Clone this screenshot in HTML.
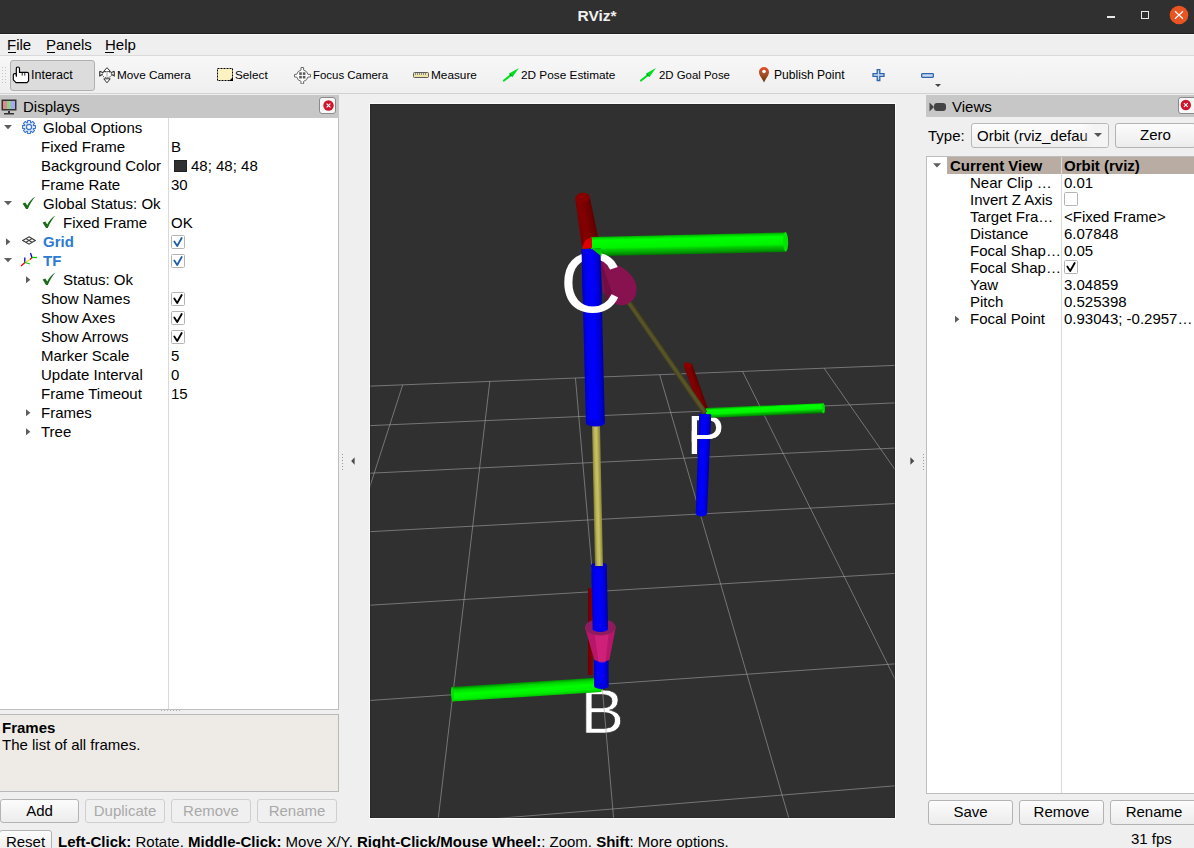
<!DOCTYPE html>
<html><head><meta charset="utf-8">
<style>
*{margin:0;padding:0;box-sizing:border-box}
html,body{width:1194px;height:848px;overflow:hidden;background:#efefef;font-family:"Liberation Sans",sans-serif;color:#000}
.a{position:absolute}
.t{position:absolute;white-space:pre;font-size:15px;line-height:19px}
.tb{position:absolute;white-space:pre;font-size:11.8px;line-height:16px}
.btn{position:absolute;border:1px solid #b3b3b3;border-radius:3px;background:linear-gradient(#fcfcfc,#ececec);font-size:15px;text-align:center;line-height:22px}
.dis{color:#a9a9a9;border-color:#cfcfcf;background:#f0f0f0}
.cb{position:absolute;width:13px;height:13px;border:1px solid #a6a6a6;background:#fff;border-radius:2px}
.row{position:absolute;left:0;height:19px}
</style></head><body>
<!-- title bar -->
<div class="a" style="left:0;top:0;width:1194px;height:34px;background:#303030;border-bottom:1px solid #1f1f1f"></div>
<div class="a" style="left:0;top:34px;width:1194px;height:1px;background:#fafafa"></div>
<div class="t" style="left:0;width:1194px;top:6px;text-align:center;color:#f0f0f0;font-weight:bold;font-size:15.5px">RViz*</div>
<div class="a" style="left:1107px;top:16px;width:8px;height:2px;background:#e8e8e8"></div>
<div class="a" style="left:1141px;top:11px;width:8px;height:8px;border:1px solid #e8e8e8"></div>
<svg class="a" style="left:1169px;top:5px" width="20" height="20" viewBox="0 0 20 20"><circle cx="10" cy="10" r="9.3" fill="#e95420"/><path d="M6 6.2L14 13.8M14 6.2L6 13.8" stroke="#fff" stroke-width="1.2"/></svg>

<!-- menu bar -->
<div class="a" style="left:0;top:55px;width:1194px;height:1px;background:#d9d9d9"></div>
<div class="t" style="left:7px;top:32px;line-height:26px">File</div>
<div class="t" style="left:46px;top:32px;line-height:26px">Panels</div>
<div class="t" style="left:105px;top:32px;line-height:26px">Help</div>
<div class="a" style="left:8px;top:52px;width:8px;height:1px;background:#000"></div>
<div class="a" style="left:47px;top:52px;width:8px;height:1px;background:#000"></div>
<div class="a" style="left:105px;top:52px;width:9px;height:1px;background:#000"></div>
<!-- toolbar -->
<div class="a" style="left:0;top:56px;width:1194px;height:37px;background:linear-gradient(#f7f7f7,#efefef)"></div>
<div class="a" style="left:0;top:93px;width:1194px;height:1px;background:#d2d2d2"></div>
<!-- grip -->
<svg class="a" style="left:1px;top:66px" width="8" height="18"><g fill="#c4c4c4"><rect x="1" y="1" width="1" height="1"/><rect x="4" y="1" width="1" height="1"/><rect x="1" y="4" width="1" height="1"/><rect x="4" y="4" width="1" height="1"/><rect x="1" y="7" width="1" height="1"/><rect x="4" y="7" width="1" height="1"/><rect x="1" y="10" width="1" height="1"/><rect x="4" y="10" width="1" height="1"/><rect x="1" y="13" width="1" height="1"/><rect x="4" y="13" width="1" height="1"/><rect x="1" y="16" width="1" height="1"/><rect x="4" y="16" width="1" height="1"/></g></svg>
<div class="a" style="left:10px;top:60px;width:85px;height:31px;background:#dcdcdc;border:1px solid #b0b0b0;border-radius:3px"></div>
<svg class="a" style="left:12px;top:66px" width="18" height="18" viewBox="0 0 18 18"><path d="M4.3 9.5V2.6Q4.3 1 5.9 1Q7.5 1 7.5 2.6V6.4H15.2Q16.6 6.4 16.6 7.8V14.8L15 16.6H4L1.3 13.8V9Q1.3 7.6 2.8 7.6H4.3z" fill="#fff" stroke="#000" stroke-width="1.15" stroke-linejoin="round"/><path d="M10.2 6.6V9.6M12.8 6.6V9.6M4.3 8V11" stroke="#000" stroke-width="0.9"/></svg>
<div class="tb" style="left:31px;top:67.3px;font-size:12.5px">Interact</div>
<svg class="a" style="left:99px;top:67px" width="17" height="17" viewBox="0 0 17 17"><path d="M8 0.7L4.5 4.5h7z M8 15.8L4.8 11.8h6.4z" fill="#fff" stroke="#333" stroke-width="1"/><path d="M0.7 4.2v4.6l3.2-1.6 M15.3 4.2v4.6l-3.2-1.6 M0.7 4.2l3.5 1.6 M15.3 4.2l-3.5 1.6" fill="none" stroke="#333" stroke-width="1.1"/><ellipse cx="8" cy="7.6" rx="4.6" ry="3" fill="#fff" stroke="#333" stroke-width="1" stroke-dasharray="1.3 0.9"/><rect x="7.4" y="4.5" width="1.2" height="6.5" fill="#b8b8b8"/></svg>
<div class="tb" style="left:117px;top:67.3px;font-size:11.75px">Move Camera</div>
<svg class="a" style="left:217px;top:68px" width="17" height="14" viewBox="0 0 17 14"><rect x="0.5" y="0.5" width="15" height="12" fill="#faf2c0" stroke="#000" stroke-width="1" stroke-dasharray="2 1"/><path d="M16 9v4h-4z" fill="#000"/></svg>
<div class="tb" style="left:235px;top:67.3px;font-size:11.75px">Select</div>
<svg class="a" style="left:294px;top:67px" width="17" height="17" viewBox="0 0 17 17"><path d="M7 0.5h2.6v2.6a5.6 5.6 0 0 1 4.3 4.3h2.6V10h-2.6a5.6 5.6 0 0 1-4.3 4.3v2.6H7v-2.6A5.6 5.6 0 0 1 2.7 10H0.5V7.4h2.2A5.6 5.6 0 0 1 7 3.1z" fill="#fff" stroke="#6a6a6a" stroke-width="1"/><g fill="#5a5a5a"><rect x="5.2" y="5.3" width="2.6" height="2.6"/><rect x="8.8" y="5.3" width="2.6" height="2.6"/><rect x="5.2" y="8.9" width="2.6" height="2.6"/><rect x="8.8" y="8.9" width="2.6" height="2.6"/></g></svg>
<div class="tb" style="left:313px;top:67.3px;font-size:11.45px">Focus Camera</div>
<svg class="a" style="left:413px;top:72px" width="16" height="6" viewBox="0 0 16 6"><rect x="0.5" y="0.5" width="15" height="5" rx="1" fill="#efe3a6" stroke="#5c5c5c" stroke-width="1"/><path d="M2.5 1v2M4.5 1v2M6.5 1v2M8.5 1v2M10.5 1v2M12.5 1v2" stroke="#8a8a8a" stroke-width="1"/></svg>
<div class="tb" style="left:431px;top:67.3px;font-size:11.8px">Measure</div>
<svg class="a" style="left:503px;top:67px" width="17" height="15" viewBox="0 0 17 15"><path d="M1 13.5L8 8" stroke="#00e020" stroke-width="2.2" stroke-linecap="round"/><path d="M16 1L6 6.5 9.5 10z" fill="#00e020"/><path d="M6.5 6.8L9 9.5" stroke="#0a7a0a" stroke-width="1"/></svg>
<div class="tb" style="left:521px;top:67.3px;font-size:11.8px">2D Pose Estimate</div>
<svg class="a" style="left:640px;top:67px" width="17" height="15" viewBox="0 0 17 15"><path d="M1 13.5L8 8" stroke="#00e020" stroke-width="2.2" stroke-linecap="round"/><path d="M16 1L6 6.5 9.5 10z" fill="#00e020"/><path d="M6.5 6.8L9 9.5" stroke="#0a7a0a" stroke-width="1"/></svg>
<div class="tb" style="left:659px;top:67.3px;font-size:11.4px">2D Goal Pose</div>
<svg class="a" style="left:758px;top:66px" width="12" height="17" viewBox="0 0 12 17"><defs><linearGradient id="pin" x1="0" y1="0" x2="0" y2="1"><stop offset="0" stop-color="#e8502c"/><stop offset="0.55" stop-color="#a04a20"/><stop offset="1" stop-color="#553510"/></linearGradient></defs><path d="M6 16.5C4 12 1 9.5 1 6a5 5 0 0 1 10 0c0 3.5-3 6-5 10.5z" fill="url(#pin)"/><circle cx="6" cy="5.5" r="1.8" fill="#fff"/></svg>
<div class="tb" style="left:774px;top:67.3px;font-size:12.1px">Publish Point</div>
<svg class="a" style="left:872px;top:69px" width="14" height="13" viewBox="0 0 14 13"><path d="M5.2 0.7h2.6v4h4.2v2.6H7.8v4.2H5.2V7.3H1V4.7h4.2z" fill="#c9daf0" stroke="#2f63ab" stroke-width="1.3"/></svg>
<svg class="a" style="left:921px;top:73px" width="13" height="5" viewBox="0 0 13 5"><rect x="0.65" y="0.65" width="11.7" height="3.7" rx="0.8" fill="#c9daf0" stroke="#2f63ab" stroke-width="1.3"/></svg>
<div class="a" style="left:935px;top:84px;width:0;height:0;border-left:3px solid transparent;border-right:3px solid transparent;border-top:3px solid #444"></div>

<!-- displays panel -->
<div class="a" style="left:0;top:95px;width:339px;height:23px;background:#c7c7c7"></div>
<svg class="a" style="left:1px;top:99px" width="17" height="16" viewBox="0 0 17 16"><rect x="0.5" y="0.5" width="15" height="11" fill="#333"/><rect x="2" y="2" width="4" height="8" fill="#d98c8c"/><rect x="6" y="2" width="4" height="8" fill="#8fd08f"/><rect x="10" y="2" width="4" height="8" fill="#a8a8f0"/><rect x="7" y="12" width="2" height="2" fill="#333"/><rect x="3" y="14" width="10" height="1.5" fill="#333"/></svg>
<div class="t" style="left:23px;top:96px;line-height:21px">Displays</div>
<div class="a" style="left:319px;top:97px;width:17px;height:17px;background:#f8f8f8;border:1px solid #8a8a8a;border-radius:3px"></div>
<svg class="a" style="left:321.5px;top:98.5px" width="13" height="13" viewBox="0 0 13 13"><circle cx="6.5" cy="6.5" r="5.2" fill="#d0142c"/><path d="M4.6 4.6L8.4 8.4M8.4 4.6L4.6 8.4" stroke="#fff" stroke-width="1.1"/></svg>
<div class="a" style="left:0;top:118px;width:339px;height:592px;background:#fff;border-right:1px solid #bdbdbd;border-bottom:1px solid #bdbdbd"></div>
<div class="a" style="left:168px;top:118px;width:1px;height:591px;background:#d9d9d9"></div>
<svg class="a" style="left:4px;top:118px" width="9" height="19"><path d="M0 7H8L4 11.3Z" fill="#5e5e5e"/></svg>
<svg class="a" style="left:22px;top:120px" width="14" height="14" viewBox="0 0 14 14"><path d="M11.33 5.44 L13.46 5.66 L13.46 8.34 L11.33 8.56 L11.16 8.96 L12.52 10.62 L10.62 12.52 L8.96 11.16 L8.56 11.33 L8.34 13.46 L5.66 13.46 L5.44 11.33 L5.04 11.16 L3.38 12.52 L1.48 10.62 L2.84 8.96 L2.67 8.56 L0.54 8.34 L0.54 5.66 L2.67 5.44 L2.84 5.04 L1.48 3.38 L3.38 1.48 L5.04 2.84 L5.44 2.67 L5.66 0.54 L8.34 0.54 L8.56 2.67 L8.96 2.84 L10.62 1.48 L12.52 3.38 L11.16 5.04Z" fill="#e4ecf8" stroke="#3b78cc" stroke-width="1.1" stroke-linejoin="round"/><circle cx="7" cy="7" r="2.6" fill="none" stroke="#3b78cc" stroke-width="1.1"/><circle cx="7" cy="7" r="1" fill="#fff"/></svg>
<div class="t" style="left:43px;top:118px;">Global Options</div>
<div class="t" style="left:41px;top:137px;">Fixed Frame</div>
<div class="t" style="left:171px;top:137px;">B</div>
<div class="t" style="left:41px;top:156px;">Background Color</div>
<div class="a" style="left:174px;top:160px;width:13px;height:12px;background:#303030;border:1px solid #222"></div>
<div class="t" style="left:191px;top:156px;">48; 48; 48</div>
<div class="t" style="left:41px;top:175px;">Frame Rate</div>
<div class="t" style="left:171px;top:175px;">30</div>
<svg class="a" style="left:4px;top:194px" width="9" height="19"><path d="M0 7H8L4 11.3Z" fill="#5e5e5e"/></svg>
<svg class="a" style="left:22px;top:196px" width="14" height="14" viewBox="0 0 14 14"><path d="M0.6 7.6L3.4 6.4L5.2 9.4C7.2 5.6 9.6 2.6 13.4 0.4C10.6 3.6 8 7.4 5.8 12.9H4z" fill="#1a6b1a"/></svg>
<div class="t" style="left:43px;top:194px;">Global Status: Ok</div>
<svg class="a" style="left:42px;top:215px" width="14" height="14" viewBox="0 0 14 14"><path d="M0.6 7.6L3.4 6.4L5.2 9.4C7.2 5.6 9.6 2.6 13.4 0.4C10.6 3.6 8 7.4 5.8 12.9H4z" fill="#1a6b1a"/></svg>
<div class="t" style="left:63px;top:213px;">Fixed Frame</div>
<div class="t" style="left:171px;top:213px;">OK</div>
<svg class="a" style="left:6px;top:232px" width="9" height="19"><path d="M0 6.2V13.2L4.4 9.7Z" fill="#5e5e5e"/></svg>
<svg class="a" style="left:22px;top:236px" width="14" height="9" viewBox="0 0 14 9"><g fill="none" stroke="#3a3a3a" stroke-width="1.1"><path d="M7 0.8L13.2 4.5 7 8.2 0.8 4.5z"/><path d="M4 2.6L10 6.3M10 2.6L4 6.3"/></g></svg>
<div class="t" style="left:43px;top:232px;font-weight:bold;color:#2c7bd2">Grid</div>
<svg class="a" style="left:171px;top:234.5px" width="14" height="14" viewBox="0 0 14 14"><rect x="0.5" y="0.5" width="13" height="13" rx="1" fill="#fff" stroke="#b4b4b4"/><path d="M3.3 6.5L6.2 11L10.7 3" fill="none" stroke="#1f5fa8" stroke-width="1.8" stroke-linecap="round" stroke-linejoin="round"/></svg>
<svg class="a" style="left:4px;top:251px" width="9" height="19"><path d="M0 7H8L4 11.3Z" fill="#5e5e5e"/></svg>
<svg class="a" style="left:20px;top:252px" width="18" height="16" viewBox="0 0 18 16"><path d="M1 14L5 10.5" stroke="#e00" stroke-width="1.3"/><path d="M4.8 5.5V10.5" stroke="#00d" stroke-width="1.3"/><path d="M5 10.5L10 7.5" stroke="#dd0" stroke-width="1.3"/><path d="M5 10.5L10 12" stroke="#0c0" stroke-width="1.3"/><path d="M10 7.5L12 5.5" stroke="#e00" stroke-width="1.3"/><path d="M12 5.5L10.5 1" stroke="#00d" stroke-width="1.3"/><path d="M12 5.5H17" stroke="#0c0" stroke-width="1.3"/></svg>
<div class="t" style="left:43px;top:251px;font-weight:bold;color:#2c7bd2">TF</div>
<svg class="a" style="left:171px;top:253.5px" width="14" height="14" viewBox="0 0 14 14"><rect x="0.5" y="0.5" width="13" height="13" rx="1" fill="#fff" stroke="#b4b4b4"/><path d="M3.3 6.5L6.2 11L10.7 3" fill="none" stroke="#1f5fa8" stroke-width="1.8" stroke-linecap="round" stroke-linejoin="round"/></svg>
<svg class="a" style="left:26px;top:270px" width="9" height="19"><path d="M0 6.2V13.2L4.4 9.7Z" fill="#5e5e5e"/></svg>
<svg class="a" style="left:42px;top:272px" width="14" height="14" viewBox="0 0 14 14"><path d="M0.6 7.6L3.4 6.4L5.2 9.4C7.2 5.6 9.6 2.6 13.4 0.4C10.6 3.6 8 7.4 5.8 12.9H4z" fill="#1a6b1a"/></svg>
<div class="t" style="left:63px;top:270px;">Status: Ok</div>
<div class="t" style="left:41px;top:289px;">Show Names</div>
<svg class="a" style="left:171px;top:291.5px" width="14" height="14" viewBox="0 0 14 14"><rect x="0.5" y="0.5" width="13" height="13" rx="1" fill="#fff" stroke="#b4b4b4"/><path d="M3.3 6.5L6.2 11L10.7 3" fill="none" stroke="#000" stroke-width="1.8" stroke-linecap="round" stroke-linejoin="round"/></svg>
<div class="t" style="left:41px;top:308px;">Show Axes</div>
<svg class="a" style="left:171px;top:310.5px" width="14" height="14" viewBox="0 0 14 14"><rect x="0.5" y="0.5" width="13" height="13" rx="1" fill="#fff" stroke="#b4b4b4"/><path d="M3.3 6.5L6.2 11L10.7 3" fill="none" stroke="#000" stroke-width="1.8" stroke-linecap="round" stroke-linejoin="round"/></svg>
<div class="t" style="left:41px;top:327px;">Show Arrows</div>
<svg class="a" style="left:171px;top:329.5px" width="14" height="14" viewBox="0 0 14 14"><rect x="0.5" y="0.5" width="13" height="13" rx="1" fill="#fff" stroke="#b4b4b4"/><path d="M3.3 6.5L6.2 11L10.7 3" fill="none" stroke="#000" stroke-width="1.8" stroke-linecap="round" stroke-linejoin="round"/></svg>
<div class="t" style="left:41px;top:346px;">Marker Scale</div>
<div class="t" style="left:171px;top:346px;">5</div>
<div class="t" style="left:41px;top:365px;">Update Interval</div>
<div class="t" style="left:171px;top:365px;">0</div>
<div class="t" style="left:41px;top:384px;">Frame Timeout</div>
<div class="t" style="left:171px;top:384px;">15</div>
<svg class="a" style="left:26px;top:403px" width="9" height="19"><path d="M0 6.2V13.2L4.4 9.7Z" fill="#5e5e5e"/></svg>
<div class="t" style="left:41px;top:403px;">Frames</div>
<svg class="a" style="left:26px;top:422px" width="9" height="19"><path d="M0 6.2V13.2L4.4 9.7Z" fill="#5e5e5e"/></svg>
<div class="t" style="left:41px;top:422px;">Tree</div>
<svg class="a" style="left:160px;top:709px" width="20" height="4"><g fill="#b0b0b0"><rect x="1" y="1" width="1" height="1"/><rect x="4" y="1" width="1" height="1"/><rect x="7" y="1" width="1" height="1"/><rect x="10" y="1" width="1" height="1"/><rect x="13" y="1" width="1" height="1"/><rect x="16" y="1" width="1" height="1"/><rect x="19" y="1" width="1" height="1"/></g></svg>
<div class="a" style="left:0;top:714px;width:339px;height:78px;background:#eeebe7;border:1px solid #b9b9b9;border-left:none"></div>
<div class="t" style="left:2px;top:718px;font-weight:bold">Frames</div>
<div class="t" style="left:2px;top:735px">The list of all frames.</div>
<div class="btn" style="left:0;top:799px;width:79px;height:24px">Add</div>
<div class="btn dis" style="left:85px;top:799px;width:80px;height:24px">Duplicate</div>
<div class="btn dis" style="left:171px;top:799px;width:80px;height:24px">Remove</div>
<div class="btn dis" style="left:257px;top:799px;width:80px;height:24px">Rename</div>
<!-- viewport -->
<div class="a" style="left:369px;top:103px;width:527px;height:716px;background:#fbfbfb"></div>
<svg class="a" style="left:370px;top:104px" width="525" height="714" viewBox="0 0 525 714">
<rect width="525" height="714" fill="#303030"/>
<g transform="translate(-370 -104)"><text x="0" y="0" font-family="Liberation Sans" font-size="63" fill="#fff" stroke="#303030" stroke-width="0.7" transform="translate(580.6 733.3) scale(1.04 1)">B</text></g>
<g stroke="#a0a0a4" stroke-opacity="0.62" stroke-width="1" fill="none">
<line x1="-237.61" y1="291.53" x2="-804.00" y2="895.54"/>
<line x1="-145.95" y1="287.91" x2="-590.81" y2="895.12"/>
<line x1="-55.85" y1="284.34" x2="-378.48" y2="895.79"/>
<line x1="32.72" y1="280.84" x2="-165.63" y2="895.37"/>
<line x1="119.81" y1="277.40" x2="46.94" y2="894.95"/>
<line x1="205.45" y1="274.02" x2="259.32" y2="895.62"/>
<line x1="289.68" y1="270.69" x2="471.55" y2="895.20"/>
<line x1="372.53" y1="267.41" x2="684.04" y2="895.87"/>
<line x1="454.03" y1="264.19" x2="895.93" y2="895.45"/>
<line x1="534.22" y1="261.02" x2="1107.53" y2="895.03"/>
<line x1="613.13" y1="257.90" x2="1320.07" y2="895.70"/>
<line x1="-237.61" y1="291.53" x2="613.13" y2="257.90"/>
<line x1="-277.10" y1="333.63" x2="652.44" y2="293.36"/>
<line x1="-325.06" y1="384.78" x2="699.39" y2="335.72"/>
<line x1="-384.57" y1="448.25" x2="756.45" y2="387.20"/>
<line x1="-460.37" y1="529.08" x2="827.27" y2="451.10"/>
<line x1="-560.20" y1="635.54" x2="917.53" y2="532.53"/>
<line x1="-697.65" y1="782.12" x2="1036.48" y2="639.85"/>
<line x1="-898.90" y1="996.74" x2="1200.42" y2="787.75"/>
<line x1="-1221.83" y1="1341.13" x2="1440.79" y2="1004.62"/>
<line x1="-1824.61" y1="1983.94" x2="1827.31" y2="1353.34"/>
<line x1="-3349.07" y1="3609.67" x2="2551.47" y2="2006.68"/>

</g>
<defs><linearGradient id="g1" gradientUnits="userSpaceOnUse" x1="592.8" y1="631.5" x2="588.0" y2="631.5"><stop offset="0" stop-color="#8a0000"/><stop offset="1" stop-color="#6a0000"/></linearGradient><linearGradient id="g2" gradientUnits="userSpaceOnUse" x1="526.0" y1="682.2" x2="527.0" y2="696.8"><stop offset="0" stop-color="#008a00"/><stop offset="0.2" stop-color="#00d800"/><stop offset="0.5" stop-color="#00ff00"/><stop offset="0.8" stop-color="#00f000"/><stop offset="1" stop-color="#00c000"/></linearGradient><linearGradient id="g3" gradientUnits="userSpaceOnUse" x1="594.0" y1="671.0" x2="608.6" y2="671.0"><stop offset="0" stop-color="#0000c8"/><stop offset="0.2" stop-color="#0000f0"/><stop offset="0.5" stop-color="#0000ff"/><stop offset="0.8" stop-color="#0000dc"/><stop offset="1" stop-color="#0000a0"/></linearGradient><linearGradient id="g4" gradientUnits="userSpaceOnUse" x1="591.9" y1="597.2" x2="607.5" y2="596.8"><stop offset="0" stop-color="#0000c8"/><stop offset="0.2" stop-color="#0000f0"/><stop offset="0.5" stop-color="#0000ff"/><stop offset="0.8" stop-color="#0000dc"/><stop offset="1" stop-color="#0000a0"/></linearGradient><linearGradient id="g5" gradientUnits="userSpaceOnUse" x1="593.5" y1="496.1" x2="601.5" y2="495.9"><stop offset="0" stop-color="#7f7a38"/><stop offset="0.3" stop-color="#bdb657"/><stop offset="0.55" stop-color="#c9c262"/><stop offset="1" stop-color="#858038"/></linearGradient><linearGradient id="g6" gradientUnits="userSpaceOnUse" x1="700.0" y1="386.3" x2="692.0" y2="389.2"><stop offset="0" stop-color="#5e0000"/><stop offset="0.3" stop-color="#720000"/><stop offset="0.65" stop-color="#840000"/><stop offset="1" stop-color="#7a0000"/></linearGradient><linearGradient id="g7" gradientUnits="userSpaceOnUse" x1="764.9" y1="415.6" x2="764.4" y2="405.6"><stop offset="0" stop-color="#007400"/><stop offset="0.12" stop-color="#009c00"/><stop offset="0.28" stop-color="#00c400"/><stop offset="0.42" stop-color="#00f400"/><stop offset="0.8" stop-color="#00ff00"/><stop offset="0.9" stop-color="#00dc00"/><stop offset="1" stop-color="#00a800"/></linearGradient><linearGradient id="g8" gradientUnits="userSpaceOnUse" x1="697.4" y1="463.3" x2="709.2" y2="463.7"><stop offset="0" stop-color="#0000c8"/><stop offset="0.2" stop-color="#0000f0"/><stop offset="0.5" stop-color="#0000ff"/><stop offset="0.8" stop-color="#0000dc"/><stop offset="1" stop-color="#0000a0"/></linearGradient><linearGradient id="g9" gradientUnits="userSpaceOnUse" x1="594.5" y1="219.6" x2="578.5" y2="222.4"><stop offset="0" stop-color="#5e0000"/><stop offset="0.3" stop-color="#720000"/><stop offset="0.65" stop-color="#840000"/><stop offset="1" stop-color="#7a0000"/></linearGradient><linearGradient id="g10" gradientUnits="userSpaceOnUse" x1="688.6" y1="254.1" x2="688.2" y2="234.7"><stop offset="0" stop-color="#007400"/><stop offset="0.12" stop-color="#009c00"/><stop offset="0.28" stop-color="#00c400"/><stop offset="0.42" stop-color="#00f400"/><stop offset="0.8" stop-color="#00ff00"/><stop offset="0.9" stop-color="#00dc00"/><stop offset="1" stop-color="#00a800"/></linearGradient><linearGradient id="g11" gradientUnits="userSpaceOnUse" x1="583.7" y1="336.2" x2="602.7" y2="335.8"><stop offset="0" stop-color="#0000c8"/><stop offset="0.2" stop-color="#0000f0"/><stop offset="0.5" stop-color="#0000ff"/><stop offset="0.8" stop-color="#0000dc"/><stop offset="1" stop-color="#0000a0"/></linearGradient><linearGradient id="g12" gradientUnits="userSpaceOnUse" x1="663.2" y1="357.1" x2="667.8" y2="353.9"><stop offset="0" stop-color="#3c3a1a"/><stop offset="0.3" stop-color="#55512a"/><stop offset="0.6" stop-color="#5a5629"/><stop offset="1" stop-color="#3a3818"/></linearGradient><linearGradient id="g13" gradientUnits="userSpaceOnUse" x1="583.7" y1="336.2" x2="602.7" y2="335.8"><stop offset="0" stop-color="#0000c8"/><stop offset="0.2" stop-color="#0000f0"/><stop offset="0.5" stop-color="#0000ff"/><stop offset="0.8" stop-color="#0000dc"/><stop offset="1" stop-color="#0000a0"/></linearGradient><filter id="lblur" x="-10%" y="-10%" width="120%" height="120%"><feGaussianBlur stdDeviation="0.45"/></filter></defs><g transform="translate(-370 -104)"><path d="M592.8 675.0L592.8 588.0L588.0 588.0L588.0 675.0Z" fill="url(#g1)"/>
<path d="M600.5 677.5L451.5 686.9L452.5 701.5L601.5 692.1Z" fill="url(#g2)"/>
<ellipse cx="452.5" cy="694.2" rx="1.5" ry="7.3" fill="#00e000" transform="rotate(-3 452.5 694.2)"/>
<path d="M593.9 656.0L594.1 686.0L608.7 686.0L608.5 656.0Z" fill="url(#g3)"/>
<ellipse cx="601.4" cy="686" rx="7.3" ry="3" fill="#0000e0" transform="rotate(0 601.4 686)"/>
<path d="M585 627.5 L594.3 660 Q601.8 663 609.4 660 L615.7 627.5 Z" fill="#b8166a"/>
<path d="M594 630 L598.5 662 Q602 663 605.5 662 L609 630z" fill="#d6247e" opacity="0.75"/>
<ellipse cx="600.35" cy="627.2" rx="15.35" ry="8.2" fill="#8e1c5c" transform="rotate(0 600.35 627.2)"/>
<path d="M591.2 565.2L592.6 629.2L608.1 628.8L606.8 564.8Z" fill="url(#g4)"/>
<ellipse cx="600.35" cy="629" rx="7.7" ry="3" fill="#0000f0" transform="rotate(0 600.35 629)"/>
<ellipse cx="599" cy="565.5" rx="8" ry="3.2" fill="#0000c8" transform="rotate(0 599 565.5)"/>
<path d="M592.0 426.1L595.0 566.1L603.0 565.9L600.0 425.9Z" fill="url(#g5)"/>
<text x="687.3" y="454" filter="url(#lblur)" font-family="Liberation Sans" font-size="55.5" fill="#fff">P</text>
<path d="M708.0 408.6L692.0 364.1L684.0 366.9L700.0 411.4Z" fill="url(#g6)"/>
<ellipse cx="688" cy="365.5" rx="4.3" ry="3" fill="#8a0000" transform="rotate(20 688 365.5)"/>
<path d="M706.2 418.0L823.5 413.2L823.1 403.2L705.8 408.0Z" fill="url(#g7)"/>
<ellipse cx="823.3" cy="408.2" rx="1.6" ry="5" fill="#00e000" transform="rotate(-2 823.3 408.2)"/>
<path d="M699.2 413.8L695.7 512.8L707.1 513.2L711.2 414.2Z" fill="url(#g8)"/>
<ellipse cx="701.4" cy="513" rx="5.8" ry="3.5" fill="#0000e8" transform="rotate(0 701.4 513)"/>
<clipPath id="pbot"><rect x="690" y="431" width="40" height="11"/></clipPath>
<g clip-path="url(#pbot)"><text x="687.3" y="454" filter="url(#lblur)" font-family="Liberation Sans" font-size="55.5" fill="#fff">P</text></g>
<path d="M599.4 242.5L589.7 196.7L575.3 199.3L581.6 245.5Z" fill="url(#g9)"/>
<ellipse cx="582.5" cy="198" rx="7.3" ry="5.2" fill="#860000" transform="rotate(-9 582.5 198)"/>
<path d="M591.2 256.3L786.0 251.9L785.6 232.5L590.8 236.9Z" fill="url(#g10)"/>
<ellipse cx="785.6" cy="241.8" rx="2.6" ry="9.7" fill="#00e400" transform="rotate(-1.3 785.6 241.8)"/>
<path d="M582 249 Q584 238 592 237.5 L592 248 Z" fill="#e00000"/>
<path d="M581.5 249.2L585.9 423.2L604.9 422.8L600.5 248.8Z" fill="url(#g11)"/>
<ellipse cx="595.4" cy="423" rx="9.5" ry="3.5" fill="#0000d8" transform="rotate(0 595.4 423)"/>
<path d="M623.7 299.6L702.7 414.6L707.3 411.4L628.3 296.4Z" fill="url(#g12)"/>
<path d="M601 256 L619 266 C633 273 640 285 635 297 C630 305 622 307 616 304 L603 292 Z" fill="#881250"/>
<path d="M600 258 L606 304 L616 304 Z" fill="#6a0c3e" opacity="0.7"/>
<path d="M600 258 L612 266 L630 277 Z" fill="#9a1862" opacity="0.5"/>
<text x="560" y="311.8" filter="url(#lblur)" font-family="Liberation Sans" font-size="85" fill="#fff">C</text>
<clipPath id="ctop"><rect x="560" y="248" width="60" height="48"/></clipPath>
<g clip-path="url(#ctop)">
<path d="M581.5 249.2L585.9 423.2L604.9 422.8L600.5 248.8Z" fill="url(#g13)"/>
</g>
<path d="M591.5 248.6 L601.5 248.6 L601.5 256.4 Z" fill="#00c800"/></g>
<rect x="0.5" y="0.5" width="524" height="713" fill="none" stroke="#1e1e1e" stroke-opacity="0.4"/>
</svg>
<svg class="a" style="left:340px;top:445px" width="20" height="30"><g fill="#9a9a9a"><rect x="2" y="9" width="1" height="1"/><rect x="2" y="12" width="1" height="1"/><rect x="2" y="15" width="1" height="1"/><rect x="2" y="18" width="1" height="1"/><rect x="2" y="21" width="1" height="1"/><rect x="2" y="24" width="1" height="1"/></g><path d="M11.2 16L14.6 12.2V19.8Z" fill="#4a4a4a"/></svg>
<svg class="a" style="left:895px;top:445px" width="30" height="30"><g fill="#9a9a9a"><rect x="28" y="9" width="1" height="1"/><rect x="28" y="12" width="1" height="1"/><rect x="28" y="15" width="1" height="1"/><rect x="28" y="18" width="1" height="1"/><rect x="28" y="21" width="1" height="1"/><rect x="28" y="24" width="1" height="1"/></g><path d="M19.3 16L15.4 12.2V19.8Z" fill="#4a4a4a"/></svg>
<!-- views panel -->
<div class="a" style="left:926px;top:95px;width:268px;height:22px;background:#c7c7c7"></div>
<svg class="a" style="left:929px;top:102px" width="18" height="10" viewBox="0 0 18 10"><path d="M0.5 0.5L5 5 0.5 9.5z" fill="#444"/><rect x="5" y="1" width="12" height="8" rx="3" fill="#444"/></svg>
<div class="t" style="left:952px;top:96px;line-height:21px">Views</div>
<div class="a" style="left:1178px;top:97px;width:20px;height:17px;background:#f8f8f8;border:1px solid #8a8a8a;border-radius:3px"></div>
<svg class="a" style="left:1179px;top:99px" width="13" height="13" viewBox="0 0 13 13"><circle cx="6.8" cy="6" r="5.2" fill="#d0142c"/><path d="M4.9 4.1L8.7 7.9M8.7 4.1L4.9 7.9" stroke="#fff" stroke-width="1.1"/></svg>
<div class="t" style="left:928px;top:126px">Type:</div>
<div class="a" style="left:971px;top:123px;width:138px;height:25px;border:1px solid #b8b8b8;border-radius:3px;background:linear-gradient(#fdfdfd,#eeeeee);overflow:hidden"><div class="t" style="left:5px;top:2px">Orbit (rviz_defau</div><div class="a" style="left:111px;top:0;width:26px;height:24px;background:linear-gradient(to right,rgba(246,246,246,0),#f4f4f4 40%)"></div></div>
<div class="a" style="left:1094px;top:133px;width:0;height:0;border-left:4px solid transparent;border-right:4px solid transparent;border-top:4px solid #555"></div>
<div class="btn" style="left:1115px;top:123px;width:81px;height:25px">Zero</div>
<div class="a" style="left:926px;top:156px;width:270px;height:638px;background:#fff;border:1px solid #bdbdbd"></div>
<div class="a" style="left:947px;top:157px;width:247px;height:17px;background:#b9ada3"></div>
<div class="a" style="left:1061px;top:157px;width:1px;height:636px;background:#d9d9d9"></div>
<svg class="a" style="left:933px;top:157px" width="9" height="17"><path d="M0 6.2H8L4 10.4Z" fill="#5e5e5e"/></svg>
<div class="t" style="left:950px;top:156px;line-height:19px;font-weight:bold;">Current View</div>
<div class="t" style="left:1064px;top:156px;line-height:19px;font-weight:bold;">Orbit (rviz)</div>
<div class="t" style="left:970px;top:173px;line-height:19px;">Near Clip …</div>
<div class="t" style="left:1064px;top:173px;line-height:19px;">0.01</div>
<div class="t" style="left:970px;top:190px;line-height:19px;">Invert Z Axis</div>
<svg class="a" style="left:1064px;top:192px" width="14" height="14" viewBox="0 0 14 14"><rect x="0.5" y="0.5" width="13" height="13" rx="1" fill="#fff" stroke="#b4b4b4"/></svg>
<div class="t" style="left:970px;top:207px;line-height:19px;">Target Fra…</div>
<div class="t" style="left:1064px;top:207px;line-height:19px;">&lt;Fixed Frame&gt;</div>
<div class="t" style="left:970px;top:224px;line-height:19px;">Distance</div>
<div class="t" style="left:1064px;top:224px;line-height:19px;">6.07848</div>
<div class="t" style="left:970px;top:241px;line-height:19px;">Focal Shap…</div>
<div class="t" style="left:1064px;top:241px;line-height:19px;">0.05</div>
<div class="t" style="left:970px;top:258px;line-height:19px;">Focal Shap…</div>
<svg class="a" style="left:1064px;top:260px" width="14" height="14" viewBox="0 0 14 14"><rect x="0.5" y="0.5" width="13" height="13" rx="1" fill="#fff" stroke="#b4b4b4"/><path d="M3.3 6.5L6.2 11L10.7 3" fill="none" stroke="#000" stroke-width="1.8" stroke-linecap="round" stroke-linejoin="round"/></svg>
<div class="t" style="left:970px;top:275px;line-height:19px;">Yaw</div>
<div class="t" style="left:1064px;top:275px;line-height:19px;">3.04859</div>
<div class="t" style="left:970px;top:292px;line-height:19px;">Pitch</div>
<div class="t" style="left:1064px;top:292px;line-height:19px;">0.525398</div>
<div class="t" style="left:970px;top:309px;line-height:19px;">Focal Point</div>
<div class="t" style="left:1064px;top:309px;line-height:19px;">0.93043; -0.2957…</div>
<svg class="a" style="left:955px;top:311px" width="9" height="17"><path d="M0 4.8V11.8L4.4 8.3Z" fill="#5e5e5e"/></svg>
<div class="btn" style="left:928px;top:800px;width:85px;height:25px">Save</div>
<div class="btn" style="left:1019px;top:800px;width:85px;height:25px">Remove</div>
<div class="btn" style="left:1110px;top:800px;width:88px;height:25px">Rename</div>
<!-- status bar -->
<div class="btn" style="left:-1px;top:830px;width:53px;height:24px">Reset</div>
<div class="t" style="left:58px;top:832px"><b>Left-Click:</b> Rotate. <b>Middle-Click:</b> Move X/Y. <b>Right-Click/Mouse Wheel:</b>: Zoom. <b>Shift</b>: More options.</div>
<div class="t" style="left:1131px;top:829px">31 fps</div>
</body></html>
